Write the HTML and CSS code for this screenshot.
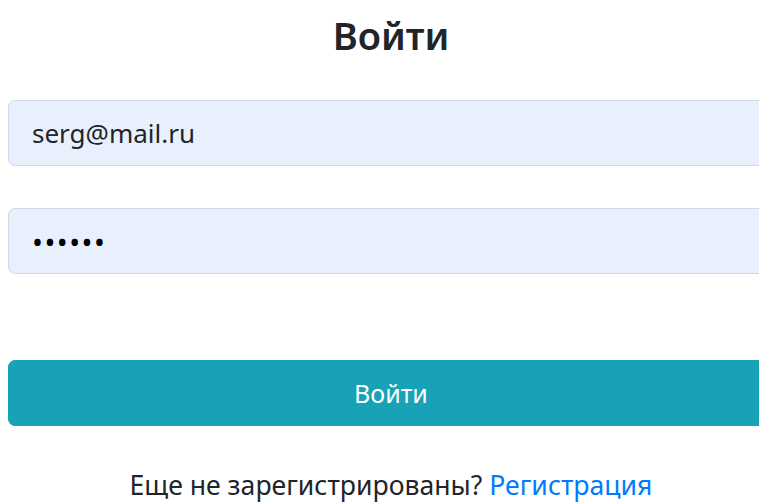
FILE: index.html
```html
<!DOCTYPE html>
<html lang="ru">
<head>
<meta charset="utf-8">
<title>Вход</title>
<link rel="stylesheet" href="styles.css">
</head>
<body>
<main class="login">
  <h1 class="login-title">Войти</h1>
  <form class="login-form">
    <input class="field" type="email" value="serg@mail.ru">
    <input class="field" type="password" value="123456">
    <button class="btn-submit" type="button">Войти</button>
  </form>
  <p class="login-hint">Еще не зарегистрированы? <a href="#" class="link">Регистрация</a></p>
</main>
</body>
</html>
```

FILE: styles.css
```css
html, body {
  margin: 0;
  padding: 0;
  overflow: hidden;
  background: #fff;
}

body {
  padding: 8px;
  font-family: "Noto Sans", "Open Sans", sans-serif;
  color: #212529;
}

.login {
  width: 766px;
  display: flex;
  flex-direction: column;
}

.login-title {
  margin: 5px 0 0;
  height: 44px;
  line-height: 44px;
  font-size: 38px;
  font-weight: 600;
  text-align: center;
  color: #212529;
}

.login-form {
  margin-top: 43px;
  display: flex;
  flex-direction: column;
}

.field {
  box-sizing: border-box;
  height: 66px;
  width: 100%;
  margin: 0 0 42px;
  padding: 0 23px;
  border: 1px solid #d2d8df;
  border-radius: 7px;
  background: #e8f0fe;
  font-family: inherit;
  font-size: 26px;
  color: #212529;
  outline: none;
}

.field[type="password"] {
  margin-bottom: 86px;
  font-size: 29px;
  letter-spacing: 1.5px;
  color: #000;
}

.btn-submit {
  box-sizing: border-box;
  height: 66px;
  width: 100%;
  border: 1px solid #17a2b8;
  border-radius: 7px;
  background: #17a2b8;
  color: #fff;
  font-family: inherit;
  font-size: 25px;
  cursor: pointer;
}

.login-hint {
  margin: 43px 0 0;
  line-height: 32px;
  font-size: 26.6px;
  text-align: center;
  color: #212529;
}

.link {
  color: #007bff;
  text-decoration: none;
}
```
